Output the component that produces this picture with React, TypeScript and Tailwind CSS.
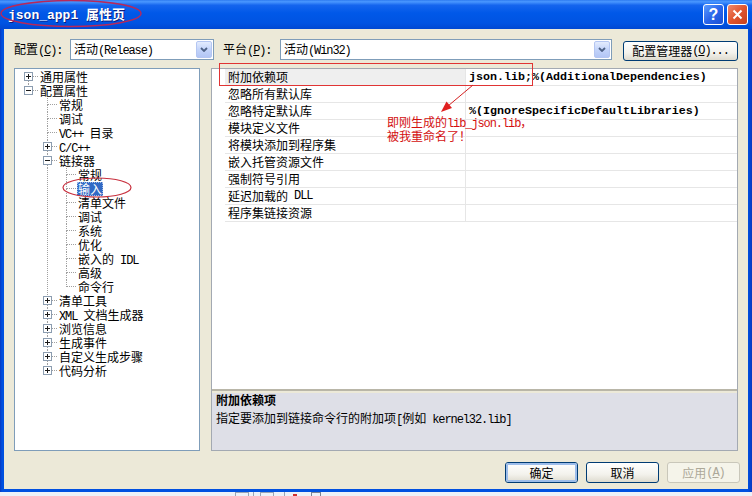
import React from 'react';

const CJK = "font-['Noto_Sans_CJK_SC',sans-serif]";
const MONO = "whitespace-pre font-['Liberation_Mono',monospace] text-[12px] tracking-[-1.1px]";

function M({ text, bold }: { text: string; bold?: boolean }) {
  const parts = text.split(/([\x20-\x7E]+)/).filter((p) => p.length > 0);
  return (
    <>
      {parts.map((p, i) =>
        /^[\x20-\x7E]+$/.test(p) ? (
          <span
            key={i}
            className={
              bold
                ? "whitespace-pre font-['Liberation_Mono',monospace] text-[11.67px] font-bold"
                : MONO
            }
          >
            {p}
          </span>
        ) : (
          <span key={i}>{p}</span>
        )
      )}
    </>
  );
}

type Node = {
  t: string;
  l: number;
  box?: '+' | '-';
  next: boolean;
  first?: boolean;
  sel?: boolean;
};

const tree: Node[] = [
  { t: '通用属性', l: 0, box: '+', next: true, first: true },
  { t: '配置属性', l: 0, box: '-', next: false },
  { t: '常规', l: 1, next: true },
  { t: '调试', l: 1, next: true },
  { t: 'VC++ 目录', l: 1, next: true },
  { t: 'C/C++', l: 1, box: '+', next: true },
  { t: '链接器', l: 1, box: '-', next: true },
  { t: '常规', l: 2, next: true },
  { t: '输入', l: 2, next: true, sel: true },
  { t: '清单文件', l: 2, next: true },
  { t: '调试', l: 2, next: true },
  { t: '系统', l: 2, next: true },
  { t: '优化', l: 2, next: true },
  { t: '嵌入的 IDL', l: 2, next: true },
  { t: '高级', l: 2, next: true },
  { t: '命令行', l: 2, next: false },
  { t: '清单工具', l: 1, box: '+', next: true },
  { t: 'XML 文档生成器', l: 1, box: '+', next: true },
  { t: '浏览信息', l: 1, box: '+', next: true },
  { t: '生成事件', l: 1, box: '+', next: true },
  { t: '自定义生成步骤', l: 1, box: '+', next: true },
  { t: '代码分析', l: 1, box: '+', next: false },
];

const LINE = '#A0A0A0';

function Guide({ on }: { on: boolean }) {
  return (
    <svg width="19" height="14" className="block shrink-0">
      {on && <line x1="8.5" y1="0" x2="8.5" y2="14" stroke={LINE} strokeDasharray="1 1" />}
    </svg>
  );
}

function Conn({ box, next, first }: { box?: '+' | '-'; next: boolean; first?: boolean }) {
  return (
    <svg width="19" height="14" className="block shrink-0">
      {!first && <line x1="8.5" y1="0" x2="8.5" y2="7" stroke={LINE} strokeDasharray="1 1" />}
      {next && <line x1="8.5" y1="7" x2="8.5" y2="14" stroke={LINE} strokeDasharray="1 1" />}
      <line x1="9" y1="6.5" x2="19" y2="6.5" stroke={LINE} strokeDasharray="1 1" />
      {box && (
        <g>
          <rect x="4.5" y="2.5" width="8" height="8" fill="#FFFFFF" stroke="#8C9DB0" />
          <line x1="6" y1="6.5" x2="11" y2="6.5" stroke="#1A1A1A" />
          {box === '+' && <line x1="8.5" y1="4" x2="8.5" y2="9" stroke="#1A1A1A" />}
        </g>
      )}
    </svg>
  );
}

function Tree() {
  return (
    <div className="w-[186px] shrink-0 border border-[#7F9DB9] bg-white pt-[1px] pl-[5px]">
      {tree.map((n, i) => {
        const guides: boolean[] = n.l === 0 ? [] : n.l === 1 ? [false] : [false, true];
        return (
          <div key={i} className="flex h-[14px] items-center leading-[14px]">
            {guides.map((g, j) => (
              <Guide key={j} on={g} />
            ))}
            <Conn box={n.box} next={n.next} first={n.first} />
            <span
              className={
                n.sel
                  ? 'h-[14px] whitespace-nowrap bg-[#316AC5] px-[1px] leading-[14px] text-white outline-1 -outline-offset-1 outline-dotted outline-[#9FB8E6]'
                  : 'h-[14px] whitespace-nowrap px-[1px] leading-[14px]'
              }
            >
              <M text={n.t} />
            </span>
          </div>
        );
      })}
    </div>
  );
}

const rows: [string, string][] = [
  ['附加依赖项', 'json.lib;%(AdditionalDependencies)'],
  ['忽略所有默认库', ''],
  ['忽略特定默认库', '%(IgnoreSpecificDefaultLibraries)'],
  ['模块定义文件', ''],
  ['将模块添加到程序集', ''],
  ['嵌入托管资源文件', ''],
  ['强制符号引用', ''],
  ['延迟加载的 DLL', ''],
  ['程序集链接资源', ''],
];

function Grid() {
  return (
    <div className="flex-1 bg-white">
      {rows.map(([k, v], i) => (
        <div key={i} className="flex h-[17px]">
          <div className="w-[13px] shrink-0" />
          <div
            className={
              i === 0
                ? 'flex w-[240px] shrink-0 items-center border-b border-[#E6E6E6] bg-[#EFEFEF] pl-[3px] leading-[16px]'
                : 'flex w-[240px] shrink-0 items-center border-b border-[#E6E6E6] pl-[3px] leading-[16px]'
            }
          >
            <M text={k} />
          </div>
          <div className="flex flex-1 items-center border-b border-l border-[#E6E6E6] pl-[3px] leading-[16px]">
            {v && <M text={v} bold />}
          </div>
        </div>
      ))}
    </div>
  );
}

function Combo({ text, wide }: { text: string; wide?: boolean }) {
  return (
    <div
      className={
        wide
          ? 'flex h-[21px] w-[332px] shrink-0 items-center border border-[#7F9DB9] bg-white pl-[3px] pr-[1px]'
          : 'flex h-[21px] w-[144px] shrink-0 items-center border border-[#7F9DB9] bg-white pl-[3px] pr-[1px]'
      }
    >
      <div className="flex-1 whitespace-nowrap leading-[14px]">
        <M text={text} />
      </div>
      <div className="flex h-[17px] w-[16px] items-center justify-center rounded-[2px] border border-[#B4C6F2] bg-[linear-gradient(180deg,#E4ECFE,#C3D4FA_50%,#B3C6F5)]">
        <svg width="8" height="5" viewBox="0 0 8 5">
          <path d="M1 1 L4 4 L7 1" fill="none" stroke="#4D6185" strokeWidth="1.8" />
        </svg>
      </div>
    </div>
  );
}

function XpButton({ children, kind }: { children: React.ReactNode; kind?: 'default' | 'disabled' }) {
  if (kind === 'disabled') {
    return (
      <div className="flex h-[21px] w-[73px] items-center justify-center rounded-[3px] border border-[#C9C7BA] bg-[#F5F4EA] text-[#ACA899]">
        {children}
      </div>
    );
  }
  return (
    <div className="h-[21px] w-[73px] rounded-[3px] border border-[#003C74] bg-[linear-gradient(180deg,#FFFFFF,#F3F2EC_60%,#DEDBCF)]">
      <div
        className={
          kind === 'default'
            ? 'flex h-full w-full items-center justify-center rounded-[2px] border-[2px] border-[#9DBDEA]'
            : 'flex h-full w-full items-center justify-center'
        }
      >
        {children}
      </div>
    </div>
  );
}

export default function App() {
  return (
    <div className={`relative h-[496px] w-[752px] overflow-hidden bg-[#EDF1F8] text-[12px] text-black ${CJK}`}>
      <div className="flex h-[492px] flex-col bg-[linear-gradient(90deg,#0838C0,#0050E0_2px,#0050E0_748px,#0838C0)]">
        {/* title bar */}
        <div className="flex h-[29px] shrink-0 items-center bg-[linear-gradient(180deg,#2E7BF0_0%,#4A98FF_6%,#1565EE_18%,#0058E8_45%,#0053E2_80%,#0048D2_100%)] pl-[8px] pr-[4px]">
          <div className="flex-1 whitespace-nowrap text-white [text-shadow:1px_1px_#0A1E80]">
            <span className="font-['Liberation_Mono',monospace] text-[13px] font-bold">json_app1 </span>
            <span className="text-[13px] font-bold">属性页</span>
          </div>
          <div className="flex gap-[3px]">
            <div className="flex h-[21px] w-[21px] items-center justify-center rounded-[3px] border border-white bg-[linear-gradient(135deg,#5C9CFF,#2A66EA_50%,#1B4FD4)] font-['Liberation_Sans',sans-serif] text-[16px] font-bold leading-none text-white">
              ?
            </div>
            <div className="flex h-[21px] w-[21px] items-center justify-center rounded-[3px] border border-white bg-[linear-gradient(135deg,#F08A6C,#E0552F_50%,#C7401C)]">
              <svg width="11" height="11" viewBox="0 0 11 11">
                <path d="M1.5 1.5 L9.5 9.5 M9.5 1.5 L1.5 9.5" stroke="#FFFFFF" strokeWidth="2" />
              </svg>
            </div>
          </div>
        </div>

        {/* body */}
        <div className="mx-[4px] flex h-[460px] flex-col bg-[#ECE9D8] px-[10px] pt-[10px]">
          {/* top row */}
          <div className="flex h-[21px] items-center">
            <div className="w-[56px] shrink-0 whitespace-nowrap">
              配置<span className={MONO}>(<span className="underline">C</span>):</span>
            </div>
            <Combo text="活动(Release)" />
            <div className="ml-[9px] w-[57px] shrink-0 whitespace-nowrap">
              平台<span className={MONO}>(<span className="underline">P</span>):</span>
            </div>
            <Combo text="活动(Win32)" wide />
            <div className="ml-[11px] mt-[3px] h-[20px] w-[115px] shrink-0 rounded-[3px] border border-[#003C74] bg-[linear-gradient(180deg,#FFFFFF,#F3F2EC_60%,#DEDBCF)]">
              <div className="flex h-full items-center justify-center whitespace-nowrap">
                配置管理器<span className={MONO}>(<span className="underline">O</span>)...</span>
              </div>
            </div>
          </div>

          {/* main */}
          <div className="mt-[8px] flex h-[383px]">
            <Tree />
            <div className="ml-[11px] flex flex-1 flex-col border border-[#A3A9B2]">
              <Grid />
              <div className="h-[4px] shrink-0 border-t-2 border-[#B9B6A8] bg-[#ECE9D8]" />
              <div className="h-[57px] shrink-0 bg-[#DEDFE7] pl-[4px]">
                <div className="font-bold leading-[14px]">附加依赖项</div>
                <div className="mt-[4px] leading-[14px]">
                  <M text="指定要添加到链接命令行的附加项[例如 kernel32.lib]" />
                </div>
              </div>
            </div>
          </div>

          {/* buttons */}
          <div className="mr-[-2px] mt-[11px] flex justify-end gap-[8px]">
            <XpButton kind="default">确定</XpButton>
            <XpButton>取消</XpButton>
            <XpButton kind="disabled">
              应用<span className={MONO}>(<span className="underline">A</span>)</span>
            </XpButton>
          </div>
        </div>
      </div>

      {/* taskbar strip below window */}
      <div className="flex h-[4px] items-start pl-[235px]">
        <div className="h-[4px] w-[14px] border-x border-t border-[#9AA4B4]" />
        <div className="ml-[4px] h-[4px] w-[1px] bg-[#9AA4B4]" />
        <div className="ml-[6px] h-[4px] w-[14px] border-x border-t border-[#9AA4B4]" />
        <div className="ml-[10px] h-[4px] w-[1px] bg-[#9AA4B4]" />
        <div className="ml-[8px] mt-[2px] h-[2px] w-[4px] bg-[#D03030]" />
        <div className="ml-[14px] h-[4px] w-[10px] border-x border-t border-[#7A8494]" />
      </div>

      {/* annotations */}
      <svg className="pointer-events-none absolute left-0 top-0" width="752" height="496">
        <ellipse cx="71" cy="13.5" rx="70" ry="13" fill="none" stroke="#B8285A" strokeWidth="1.4" />
        <ellipse cx="97" cy="187.5" rx="34" ry="9.5" fill="none" stroke="#C8303E" strokeWidth="1.2" />
        <rect x="219.5" y="63.5" width="313" height="22" fill="none" stroke="#E03434" strokeWidth="1" />
        <line x1="473" y1="85" x2="448" y2="106" stroke="#D42020" strokeWidth="1" />
        <polygon points="441,112 452,108 446.5,101.5" fill="#E02020" />
      </svg>
      <div className="pointer-events-none absolute left-[387px] top-[116px] text-[12px] leading-[11px] text-[#D41010]">
        <div className="whitespace-nowrap">
          <M text="即刚生成的lib_json.lib，" />
        </div>
        <div className="whitespace-nowrap">被我重命名了！</div>
      </div>
    </div>
  );
}
